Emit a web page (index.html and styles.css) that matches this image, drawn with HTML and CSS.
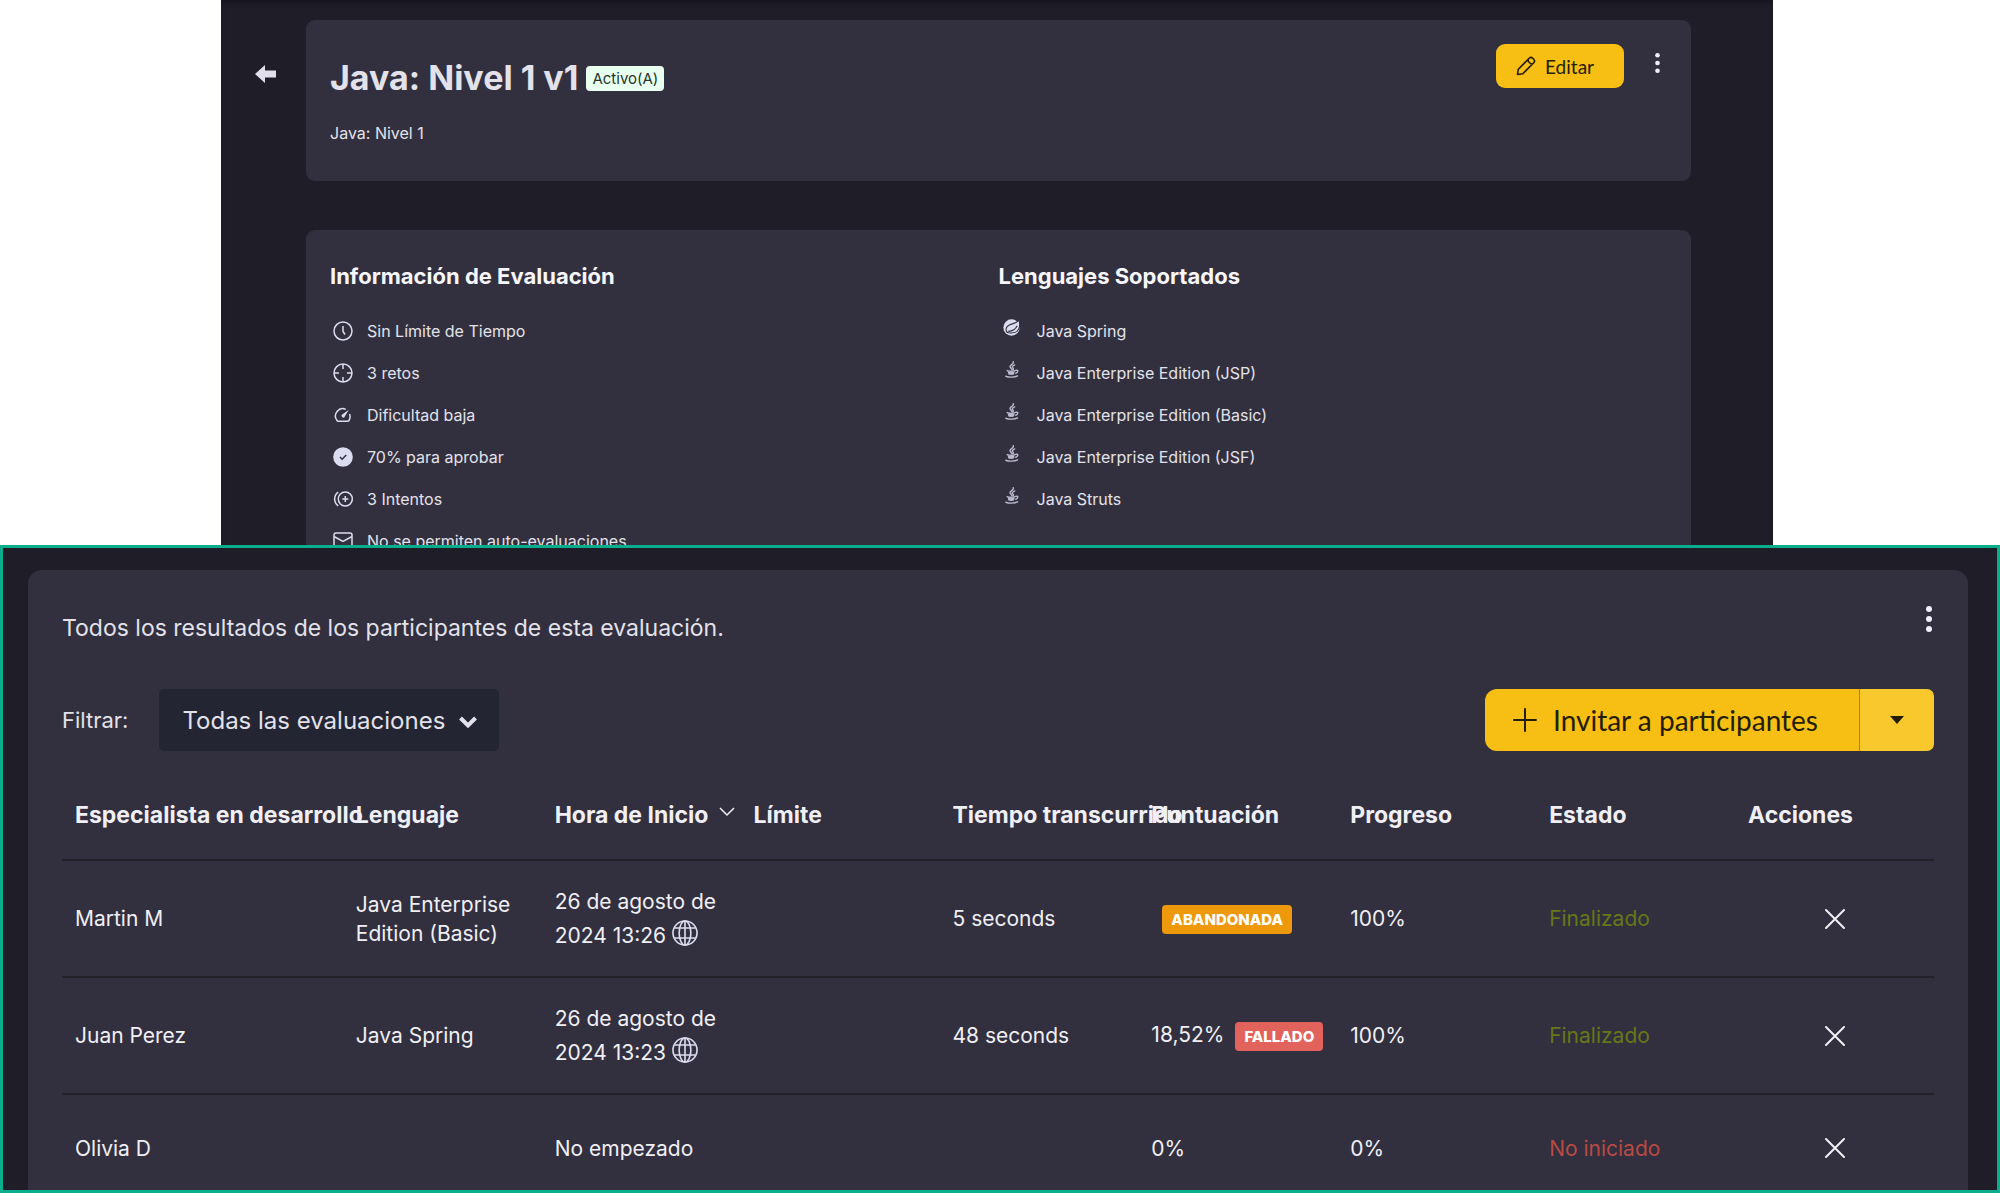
FILE: index.html
```html
<!DOCTYPE html>
<html lang="es">
<head>
    <meta charset="UTF-8">
    <meta name="viewport" content="width=device-width, initial-scale=1.0">
    <title>Java: Nivel 1 v1</title>
    <link rel="stylesheet" href="styles.css">
</head>
<body>
    <!-- Iconos compartidos -->
    <svg class="sprite" aria-hidden="true">
        <symbol id="dots" viewBox="0 0 6 26">
            <circle cx="3" cy="3" r="3"/><circle cx="3" cy="13" r="3"/><circle cx="3" cy="23" r="3"/>
        </symbol>
        <symbol id="java" viewBox="0 0 24 24">
            <g fill="none" stroke="currentColor" stroke-width="2" stroke-linecap="round">
                <path d="M14.500 1c1.500 3.500-5.500 4.500-4.500 7.500.4 1.300 2 2 2.200 3.500M16.500 5.500c-3.500 1.500-4 3-2.500 4.500 1 1 .8 1.800 0 2.500"/>
                <path d="M6 13.500c2.500 1 8 1 11 0M18.500 13c3.500-.5 3 3-.5 4.300M4 21.500c4 1.800 12.500 1.800 16.500-.5"/>
            </g>
            <path d="M6.500 14.500c3 .8 7 .8 10 0l-1 4.500c-2 .8-6 .8-8 0z" fill="currentColor"/>
        </symbol>
        <symbol id="globe" viewBox="0 0 16 16">
            <g fill="none" stroke="currentColor" stroke-width="1">
                <circle cx="8" cy="8" r="7.4"/>
                <ellipse cx="8" cy="8" rx="3.6" ry="7.4"/>
                <path d="M8 .6v14.800M1.600 4.900h12.800M1.600 11.100h12.800"/>
            </g>
        </symbol>
        <symbol id="close" viewBox="0 0 20 20">
            <path d="M1 1l18 18M19 1L1 19" fill="none" stroke="currentColor" stroke-width="2" stroke-linecap="round"/>
        </symbol>
    </svg>

    <main class="evaluation">
        <a class="back" href="#" aria-label="Volver">
            <svg width="22" height="18" viewBox="0 0 22 18"><path d="M0 9l10-9v5.500h11v7H10V18z" fill="currentColor"/></svg>
        </a>

        <div class="evaluation-content">
            <header class="card summary">
                <div>
                    <div class="title-row">
                        <h1>Java: Nivel 1 v1</h1>
                        <span class="status-badge">Activo(A)</span>
                    </div>
                    <p class="subtitle">Java: Nivel 1</p>
                </div>
                <div class="summary-actions">
                    <button class="btn btn-edit" type="button">
                        <svg width="20" height="20" viewBox="0 0 20 20" fill="none" stroke="currentColor" stroke-width="1.6" stroke-linejoin="round"><path d="M1.500 18.500l.8-5.300L13.200 2.300c1-1 2.500-1 3.500 0l1 1c1 1 1 2.500 0 3.500L6.800 17.700zM12 3.500c.3 2.500 2 4.200 4.500 4.500"/></svg>
                        Editar
                    </button>
                    <button class="menu menu-small" type="button" aria-label="Más opciones">
                        <svg><use href="#dots"/></svg>
                    </button>
                </div>
            </header>

            <section class="card details">
                <div>
                    <h2>Información de Evaluación</h2>
                    <ul class="info-list">
                        <li>
                            <svg viewBox="0 0 20 20"><circle cx="10" cy="10" r="9"/><path d="M10 5v5.500l2 3"/></svg>
                            Sin Límite de Tiempo
                        </li>
                        <li>
                            <svg viewBox="0 0 20 20"><circle cx="10" cy="10" r="9"/><path d="M10 1v5M10 14v5M1 10h5M14 10h5"/></svg>
                            3 retos
                        </li>
                        <li>
                            <svg viewBox="0 0 20 20"><path d="M12.800 4.400A7.300 7.300 0 0 0 4 15.500c.3.500.8.800 1.400.8h9.200c.6 0 1.100-.3 1.400-.8a7.300 7.300 0 0 0 .5-6.500"/><path d="M15.800 4.800l-4 6.600a1.700 1.700 0 1 1-2.600-2z" fill="currentColor" stroke="none"/></svg>
                            Dificultad baja
                        </li>
                        <li>
                            <svg viewBox="0 0 20 20"><circle cx="10" cy="10" r="9.8" fill="currentColor" stroke="none"/><path class="check" d="M7 10l2.200 2.200L13.200 8"/></svg>
                            70% para aprobar
                        </li>
                        <li>
                            <svg viewBox="0 0 20 20"><circle cx="12.3" cy="10" r="7"/><path d="M12.300 7v6M9.300 10h6M5.200 3.200a8.300 8.300 0 0 0 0 13.600"/></svg>
                            3 Intentos
                        </li>
                        <li>
                            <svg viewBox="0 0 20 20"><rect x="1" y="2" width="18" height="15" rx="2"/><path d="M1 5.500l9 5 9-5"/></svg>
                            No se permiten auto-evaluaciones
                        </li>
                    </ul>
                </div>
                <div>
                    <h2>Lenguajes Soportados</h2>
                    <ul class="info-list language-list">
                        <li>
                            <svg viewBox="0 0 24 24"><circle cx="12" cy="12" r="11.5"/><path class="leaf" d="M22.500 1.500C18 8.500 6 5.500 4.500 13.500c-.5 3 1 5.500 3.500 6 7 1 12-1 14-5 2-4 1.800-9 .5-13zM7.500 17.500c6-.5 10.500-3.500 12.500-8"/></svg>
                            Java Spring
                        </li>
                        <li class="dim"><svg><use href="#java"/></svg>Java Enterprise Edition (JSP)</li>
                        <li class="dim"><svg><use href="#java"/></svg>Java Enterprise Edition (Basic)</li>
                        <li class="dim"><svg><use href="#java"/></svg>Java Enterprise Edition (JSF)</li>
                        <li class="dim"><svg><use href="#java"/></svg>Java Struts</li>
                    </ul>
                </div>
            </section>
        </div>
    </main>

    <section class="results">
        <div class="results-card">
            <div class="results-head">
                <p>Todos los resultados de los participantes de esta evaluación.</p>
                <button class="menu" type="button" aria-label="Más opciones">
                    <svg><use href="#dots"/></svg>
                </button>
            </div>

            <div class="toolbar">
                <label for="filter">Filtrar:</label>
                <div class="select">
                    <select id="filter">
                        <option>Todas las evaluaciones</option>
                    </select>
                    <svg width="20" height="14" viewBox="0 0 20 14"><path d="M2.500 3l7.500 7.500L17.500 3" fill="none" stroke="currentColor" stroke-width="4"/></svg>
                </div>
                <div class="btn-group">
                    <button class="btn btn-invite" type="button">
                        <svg width="24" height="24" viewBox="0 0 24 24"><path d="M12 1v22M1 12h22" stroke="currentColor" stroke-width="2" stroke-linecap="round"/></svg>
                        Invitar a participantes
                    </button>
                    <button class="btn btn-toggle" type="button" aria-label="Más formas de invitar">
                        <svg width="14" height="8" viewBox="0 0 14 8"><path d="M0 0h14L7 8z" fill="currentColor"/></svg>
                    </button>
                </div>
            </div>

            <table>
                <thead>
                    <tr>
                        <th class="col-name">Especialista en desarrollo</th>
                        <th>Lenguaje</th>
                        <th>Hora de Inicio <svg class="sort" width="16" height="10" viewBox="0 0 16 10"><path d="M1 1l7 7 7-7" fill="none" stroke="currentColor" stroke-width="1.5"/></svg></th>
                        <th>Límite</th>
                        <th>Tiempo transcurrido</th>
                        <th>Puntuación</th>
                        <th>Progreso</th>
                        <th>Estado</th>
                        <th>Acciones</th>
                    </tr>
                </thead>
                <tbody>
                    <tr>
                        <td>Martin M</td>
                        <td>Java Enterprise Edition (Basic)</td>
                        <td class="date">26 de agosto de 2024 13:26 <svg class="globe"><use href="#globe"/></svg></td>
                        <td></td>
                        <td>5 seconds</td>
                        <td class="score"><span class="tag tag-abandoned">Abandonada</span></td>
                        <td>100%</td>
                        <td class="done">Finalizado</td>
                        <td class="actions"><button type="button" aria-label="Eliminar"><svg><use href="#close"/></svg></button></td>
                    </tr>
                    <tr>
                        <td>Juan Perez</td>
                        <td>Java Spring</td>
                        <td class="date">26 de agosto de 2024 13:23 <svg class="globe"><use href="#globe"/></svg></td>
                        <td></td>
                        <td>48 seconds</td>
                        <td class="score">18,52%<span class="tag tag-failed">Fallado</span></td>
                        <td>100%</td>
                        <td class="done">Finalizado</td>
                        <td class="actions"><button type="button" aria-label="Eliminar"><svg><use href="#close"/></svg></button></td>
                    </tr>
                    <tr>
                        <td>Olivia D</td>
                        <td></td>
                        <td>No empezado</td>
                        <td></td>
                        <td></td>
                        <td>0%</td>
                        <td>0%</td>
                        <td class="pending">No iniciado</td>
                        <td class="actions"><button type="button" aria-label="Eliminar"><svg><use href="#close"/></svg></button></td>
                    </tr>
                </tbody>
            </table>
        </div>
    </section>
</body>
</html>
```

FILE: styles.css
```css
* {
    box-sizing: border-box;
    margin: 0;
    padding: 0;
}

body {
    font-family: Inter, 'Open Sans', sans-serif;
    background: white;
    color: #e3e2ea;
    height: 100vh;
    overflow: hidden;
    display: grid;
    grid-template-rows: minmax(0, 545fr) minmax(0, 648fr);
}

button,
select {
    font: inherit;
    color: inherit;
    background: none;
    border: none;
    cursor: pointer;
}

ul {
    list-style: none;
}

svg {
    display: block;
}

.sprite {
    position: absolute;
    width: 0;
    height: 0;
}

/* Ficha de la evaluación */
.evaluation {
    background: #1e1d28;
    box-shadow: inset 0 4px 6px -3px #12111a;
    margin: 0 11.35% 0 11.05%;
    padding: 20px 82px 0 34px;
    overflow: hidden;
    display: flex;
    gap: 29px;
}

.back {
    color: #e0dfeb;
    padding-top: 45px;
}

.evaluation-content {
    flex: 1;
}

.card {
    background: #32303f;
    border-radius: 9px;
    padding: 24px;
}

.summary {
    display: flex;
    justify-content: space-between;
    align-items: flex-start;
    padding-bottom: 36px;
    margin-bottom: 49px;
}

.title-row {
    display: flex;
    align-items: center;
    gap: 8px;
    padding-top: 12px;
}

h1 {
    font-size: 34px;
    line-height: 44px;
    font-weight: 700;
}

.status-badge {
    background: #e9fff0;
    color: #25352d;
    border-radius: 4px;
    font-size: 15px;
    line-height: 25px;
    padding: 0 6px;
}

.subtitle {
    font-size: 16px;
    line-height: 24px;
    margin-top: 21px;
}

.summary-actions {
    display: flex;
    align-items: flex-start;
    gap: 31px;
}

.btn {
    display: flex;
    align-items: center;
    background: #f7bf13;
    color: #241d05;
    font-family: Lato, sans-serif;
}

.btn-edit {
    gap: 9px;
    height: 44px;
    padding: 0 30px 0 20px;
    border-radius: 9px;
    font-size: 19px;
}

.menu {
    color: #f0effa;
}

.menu svg {
    width: 6px;
    height: 26px;
    fill: currentColor;
}

.menu-small {
    padding: 9px 7px 0 0;
}

.menu-small svg {
    width: 5px;
    height: 20px;
}

.details {
    display: grid;
    grid-template-columns: 1fr 1fr;
}

h2 {
    color: #f7f6fb;
    font-size: 22px;
    line-height: 32px;
    font-weight: 700;
    margin: 6px 0 27px;
}

.info-list {
    display: grid;
    gap: 18px;
    padding-left: 3px;
}

.info-list li {
    display: flex;
    align-items: center;
    gap: 14px;
    font-size: 16px;
    line-height: 24px;
}

.info-list svg {
    width: 20px;
    height: 20px;
    color: #dcdcf0;
    fill: none;
    stroke: currentColor;
    stroke-width: 1.5;
}

.info-list .check {
    stroke: #32303f;
}

.language-list {
    padding-left: 4px;
}

.language-list li {
    gap: 17px;
}

.language-list svg {
    width: 17px;
    height: 17px;
    margin-bottom: 7px;
    fill: currentColor;
    stroke: none;
}

.language-list .leaf {
    stroke: #32303f;
    stroke-width: 1.5;
}

.language-list .dim svg {
    opacity: 0.8;
}

/* Resultados de los participantes */
.results {
    background: #1e1d28;
    border: 3px solid #0aae8c;
    padding: 22px 29px 0 25px;
    overflow: hidden;
}

.results-card {
    background: #32303f;
    border-radius: 14px 14px 0 0;
    padding: 36px 34px;
    min-height: 100%;
    font-size: 22px;
}

.results-head {
    display: flex;
    justify-content: space-between;
    align-items: flex-start;
    font-size: 23px;
    line-height: 44px;
    margin-bottom: 39px;
}

.results-head .menu {
    padding-right: 2px;
}

.toolbar {
    display: flex;
    align-items: center;
}

.select {
    position: relative;
    margin-left: 31px;
}

.select select {
    appearance: none;
    background: #242533;
    border-radius: 5px;
    height: 62px;
    padding: 0 54px 0 23px;
    font-size: 24px;
}

.select svg {
    position: absolute;
    right: 21px;
    top: 26px;
    pointer-events: none;
}

.btn-group {
    display: flex;
    margin-left: auto;
}

.btn-invite {
    gap: 16px;
    height: 62px;
    padding: 0 41px 0 28px;
    border-radius: 12px 0 0 12px;
    font-size: 28px;
}

.btn-toggle {
    background: #f9c82c;
    border-left: 1px solid #c07a10;
    border-radius: 0 7px 7px 0;
    width: 75px;
    justify-content: center;
}

table {
    width: 100%;
    table-layout: fixed;
    border-collapse: collapse;
    margin-top: 21px;
    color: #f0eff5;
    font-size: 21px;
    line-height: 29px;
}

.col-name {
    width: 15%;
}

th {
    height: 88px;
    padding-left: 13px;
    text-align: left;
    font-size: 23px;
    font-weight: 700;
    white-space: nowrap;
}

td {
    height: 117px;
    padding: 0 13px;
    border-top: 2px solid #22222b;
}

tr:last-child td {
    height: 107px;
}

.sort,
.globe {
    display: inline-block;
}

.sort {
    margin: 0 0 6px 5px;
}

.date {
    line-height: 34px;
}

.globe {
    width: 26px;
    height: 26px;
    color: #dcdcf0;
    vertical-align: -3px;
}

.score {
    padding-right: 0;
    white-space: nowrap;
}

.tag {
    display: inline-block;
    color: white;
    border-radius: 4px;
    font-size: 15px;
    font-weight: 800;
    line-height: 29px;
    padding: 0 9px;
    margin-left: 11px;
    text-transform: uppercase;
}

.tag-abandoned {
    background: #ee980c;
}

.tag-failed {
    background: #e2625c;
}

.done {
    color: #667718;
}

.pending {
    color: #b94a42;
}

.actions button {
    display: block;
    margin: 0 auto;
}

.actions svg {
    width: 20px;
    height: 20px;
}
```
